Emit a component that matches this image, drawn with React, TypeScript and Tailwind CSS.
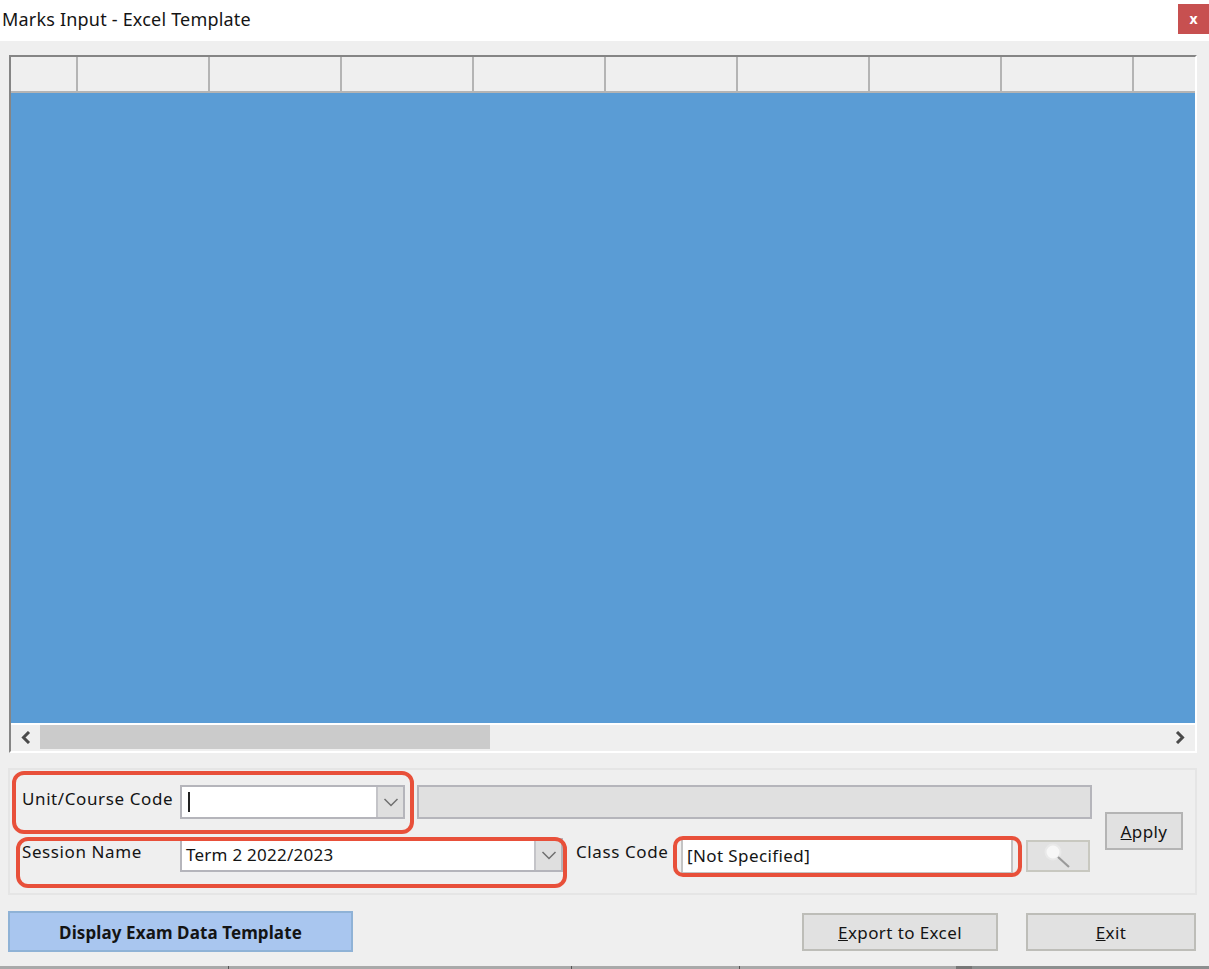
const font = { fontFamily: '"Noto Sans", "Open Sans", sans-serif' };

function Chevron({ dir }: { dir: 'left' | 'right' | 'down' }) {
  if (dir === 'down') {
    return (
      <svg width="16" height="9" viewBox="0 0 16 9" fill="none" stroke="#6f6f6f" strokeWidth="1.5">
        <path d="M1.5 1 L8 7.5 L14.5 1" />
      </svg>
    );
  }
  return (
    <svg width="11" height="13" viewBox="0 0 11 13" fill="none" stroke="#4a4a4a" strokeWidth="3">
      <path d={dir === 'left' ? 'M9 1 L3.5 6.5 L9 12' : 'M2 1 L7.5 6.5 L2 12'} />
    </svg>
  );
}

function Magnifier() {
  return (
    <svg width="32" height="28" viewBox="0 0 32 28" fill="none">
      <circle cx="11" cy="10" r="7.5" fill="#f7f7f7" stroke="#e9e9e9" strokeWidth="2" />
      <path d="M16 15 L27 25" stroke="#9a9a9a" strokeWidth="2.2" />
    </svg>
  );
}

function Annotation({ className }: { className: string }) {
  return <div className={`absolute border-[4px] border-[#e8503a] ${className}`} />;
}

const columns = [132, 132, 132, 132, 132, 132, 132, 132, 61];

export default function App() {
  return (
    <div className="relative flex h-[969px] w-[1209px] flex-col overflow-hidden bg-[#efefef] text-[#141414]" style={font}>
      <div className="flex h-[41px] shrink-0 items-start justify-between bg-white">
        <span className="mt-[6px] ml-[2px] text-[18px] leading-[26px] tracking-[0.2px]">Marks Input - Excel Template</span>
        <div className="mt-[4px] flex h-[30px] w-[31px] items-center justify-center bg-[#c75050] text-[14px] font-bold leading-none text-white">x</div>
      </div>

      <div className="mt-[14px] ml-[9px] flex h-[698px] w-[1188px] shrink-0 flex-col border-t-2 border-r-2 border-b-2 border-l-2 border-t-[#858585] border-r-white border-b-white border-l-[#858585]">
        <div className="flex h-[36px] shrink-0 border-b-2 border-[#b4b4b4] bg-[#efefef]">
          <div className="h-full w-[67px] shrink-0 border-r-2 border-[#b4b4b4]" />
          {columns.map((w, i) => (
            <div key={i} className={i < 8 ? 'h-full shrink-0 border-r-2 border-[#b4b4b4]' : 'h-full shrink-0'} style={{ width: w }} />
          ))}
        </div>
        <div className="flex-1 bg-[#5a9cd5]" />
        <div className="flex h-[28px] shrink-0 items-start border-t-2 border-white bg-[#efefef]">
          <div className="flex h-[24px] w-[29px] shrink-0 items-center justify-center">
            <Chevron dir="left" />
          </div>
          <div className="h-[24px] w-[450px] shrink-0 bg-[#cbcbcb]" />
          <div className="flex-1" />
          <div className="flex h-[24px] w-[29px] shrink-0 items-center justify-center">
            <Chevron dir="right" />
          </div>
        </div>
      </div>

      <div className="mt-[15px] ml-[8px] flex h-[127px] w-[1189px] shrink-0 items-start border-2 border-[#e5e5e5] text-[17px] leading-[22px] tracking-[0.4px]">
        <div className="flex w-[1082px] shrink-0 flex-col gap-[19px] pt-[15px]">
          <div className="flex h-[34px] items-start">
            <span className="mt-[3px] w-[170px] shrink-0 pl-[12px] tracking-[0.6px]">Unit/Course Code</span>
            <div className="flex h-[34px] w-[225px] shrink-0 border-2 border-[#b5b5bb] bg-white">
              <div className="flex-1 pl-[6px] pt-[5px]">
                <div className="h-[20px] w-[2px] bg-[#222]" />
              </div>
              <div className="flex w-[27px] items-center justify-center border-l-2 border-[#c4c4c8] bg-[#dfdfdf]">
                <Chevron dir="down" />
              </div>
            </div>
            <div className="ml-[12px] h-[34px] w-[675px] shrink-0 border-2 border-[#b5b5bb] bg-[#e0e0e0]" />
          </div>
          <div className="flex h-[34px] items-start">
            <span className="mt-[3px] w-[170px] shrink-0 pl-[12px] tracking-[0.6px]">Session Name</span>
            <div className="flex h-[34px] w-[383px] shrink-0 border-2 border-[#b5b5bb] bg-white">
              <div className="flex-1 pt-[4px] pl-[4px] tracking-[0.25px]">Term 2 2022/2023</div>
              <div className="flex w-[27px] items-center justify-center border-l-2 border-[#c4c4c8] bg-[#dfdfdf]">
                <Chevron dir="down" />
              </div>
            </div>
            <span className="ml-[13px] mt-[3px] w-[105px] shrink-0 tracking-[0.6px]">Class Code</span>
            <div className="h-[36px] w-[332px] shrink-0 border-2 border-[#c4c4c4] bg-white pt-[5px] pl-[4px]">[Not Specified]</div>
            <div className="mt-[2px] ml-[13px] flex h-[32px] w-[64px] shrink-0 items-center justify-center border-2 border-[#c8c8c0] bg-[#e2e2e2]">
              <Magnifier />
            </div>
          </div>
        </div>
        <button className="mt-[42px] ml-[13px] h-[38px] w-[78px] shrink-0 border-2 border-[#b4b4b4] bg-[#e1e1e1] pt-[2px] text-center">
          <u>A</u>pply
        </button>
      </div>

      <div className="mt-[16px] ml-[8px] flex h-[41px] w-[1188px] shrink-0 items-center text-[17px] leading-[22px] tracking-[0.4px]">
        <button className="h-[41px] w-[345px] shrink-0 border-2 border-[#8fb2d6] bg-[#a9c6ef] pt-[3px] text-center font-bold tracking-[0.1px]">Display Exam Data Template</button>
        <button className="ml-[449px] h-[38px] w-[196px] shrink-0 border-2 border-[#bdbdb8] bg-[#e1e1e1] pt-[3px] text-center">
          <u>E</u>xport to Excel
        </button>
        <button className="ml-[28px] h-[38px] w-[170px] shrink-0 border-2 border-[#bdbdb8] bg-[#e1e1e1] pt-[3px] text-center">
          <u>E</u>xit
        </button>
      </div>

      <div className="mt-auto flex h-[3px] w-full shrink-0 bg-[#a9a9a9]">
        <div className="ml-[228px] h-full w-[1px] bg-[#555]" />
        <div className="ml-[342px] h-full w-[1px] bg-[#555]" />
        <div className="ml-[167px] h-full w-[1px] bg-[#555]" />
        <div className="ml-[216px] h-full w-[16px] bg-[#777]" />
        <div className="flex-1 bg-[#8c8f8f]" />
      </div>

      <Annotation className="top-[771px] left-[12px] h-[63px] w-[402px] rounded-[12px]" />
      <Annotation className="top-[837px] left-[16px] h-[51px] w-[551px] rounded-[12px]" />
      <Annotation className="top-[836px] left-[673px] h-[41px] w-[349px] rounded-[10px]" />
    </div>
  );
}
